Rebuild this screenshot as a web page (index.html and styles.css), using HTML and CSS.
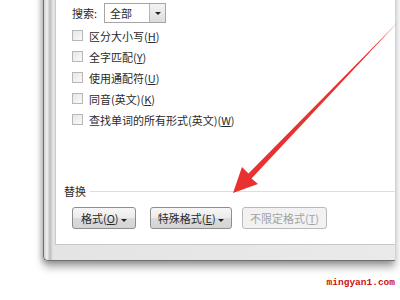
FILE: index.html
```html
<!DOCTYPE html>
<html lang="zh-CN">
<head>
    <meta charset="UTF-8">
    <title>查找和替换</title>
    <link rel="stylesheet" href="styles.css">
</head>
<body>
    <div class="dialog">
        <div class="pane">
            <div class="search-row">
                <span class="search-label">搜索:</span>
                <div class="select">
                    <span class="select-value">全部</span>
                    <span class="select-btn"><span class="caret"></span></span>
                </div>
            </div>

            <ul class="options">
                <li><span class="check"></span>区分大小写(<u>H</u>)</li>
                <li><span class="check"></span>全字匹配(<u>Y</u>)</li>
                <li><span class="check"></span>使用通配符(<u>U</u>)</li>
                <li><span class="check"></span>同音(英文)(<u>K</u>)</li>
                <li><span class="check"></span>查找单词的所有形式(英文)(<u>W</u>)</li>
            </ul>

            <div class="group-title">
                <span>替换</span>
                <span class="rule"></span>
            </div>

            <div class="buttons">
                <button class="btn btn-format">格式(<u>O</u>) <span class="caret"></span></button>
                <button class="btn btn-special">特殊格式(<u>E</u>) <span class="caret"></span></button>
                <button class="btn btn-clear disabled">不限定格式(<u>T</u>)</button>
            </div>
        </div>
    </div>

    <!-- annotation arrow drawn over the screenshot -->
    <svg class="arrow" width="400" height="300" viewBox="0 0 400 300">
        <polygon points="401,19 399,21 251.5,178.5 258,184 233,193 242,167 248.5,173.5" fill="#e8322f"/>
    </svg>

    <div class="watermark">mingyan1.com</div>
</body>
</html>
```

FILE: styles.css
```css
body {
    margin: 0;
    width: 400px;
    height: 300px;
    overflow: hidden;
    background: #fff;
    font-family: "Noto Sans CJK SC", "Noto Sans", sans-serif;
    font-size: 11px;
    color: #2a2a2a;
    position: relative;
}
.dialog {
    margin: -40px 0 0 43px;
    width: 340px;
    border: 1px solid #6f6f6f;
    border-top: none;
    border-right: none;
    border-radius: 0 0 0 5px;
    background: linear-gradient(to right, #cfcfcf 0, #f0f0f0 3px, #bdbdbd 6px, #e4e4e4 9px, #eaeaea 100%);
    padding: 0 0 15px 11px;
    box-shadow: 0 6px 9px rgba(0, 0, 0, 0.35), -2px 2px 4px rgba(0, 0, 0, 0.15);
}
.pane {
    background: #fff;
    border: 1px solid #c9c9c9;
    border-top: none;
    border-right: none;
    padding: 42px 0 0 16px;
    height: 285px;
    box-sizing: border-box;
}
.search-row {
    display: flex;
    align-items: center;
    height: 22px;
}
.search-label {
    width: 32px;
}
.select {
    display: flex;
    width: 62px;
    height: 20px;
    border: 1px solid #a5a5a5;
    box-sizing: border-box;
    background: #fff;
}
.select-value {
    flex: 1;
    padding-left: 5px;
    line-height: 18px;
}
.select-btn {
    width: 15px;
    border-left: 1px solid #b5b5b5;
    background: linear-gradient(#f4f4f4, #dcdcdc);
    display: flex;
    align-items: center;
    justify-content: center;
}
.caret {
    display: inline-block;
    width: 0;
    height: 0;
    border-left: 3px solid transparent;
    border-right: 3px solid transparent;
    border-top: 3px solid #222;
    vertical-align: middle;
}
.options {
    list-style: none;
    margin: 1px 0 0;
    padding: 0;
}
.options li {
    display: flex;
    align-items: center;
    height: 21px;
    white-space: nowrap;
}
.check {
    width: 9px;
    height: 9px;
    border: 1px solid #b7b7b7;
    background: linear-gradient(135deg, #e6e6e6, #fafafa);
    margin-right: 6px;
}
u {
    text-decoration: underline;
}
.group-title {
    display: flex;
    align-items: center;
    margin: 53px 0 0 -8px;
    height: 16px;
}
.group-title .rule {
    flex: 1;
    height: 1px;
    background: #dedede;
    margin-left: 4px;
}
.buttons {
    display: flex;
    margin-top: 8px;
}
.btn {
    height: 22px;
    padding: 0;
    margin-right: 14px;
    font-family: inherit;
    font-size: 11px;
    color: #2a2a2a;
    border: 1px solid #8e8e8e;
    border-radius: 3px;
    background: linear-gradient(#f6f6f6 0, #ebebeb 50%, #dcdcdc 51%, #d4d4d4 100%);
    white-space: nowrap;
}
.btn-format {
    width: 64px;
}
.btn-special {
    width: 82px;
    margin-right: 10px;
}
.btn-clear {
    width: 85px;
}
.btn.disabled {
    color: #a3a3a3;
    border-color: #b9b9b9;
    background: #f2f2f2;
}
.arrow {
    position: absolute;
    left: 0;
    top: 0;
    filter: blur(0.5px);
}
.watermark {
    position: absolute;
    right: 5px;
    bottom: 12px;
    font-family: "Liberation Mono", monospace;
    font-size: 9.5px;
    font-weight: bold;
    color: #cc1111;
}
```
